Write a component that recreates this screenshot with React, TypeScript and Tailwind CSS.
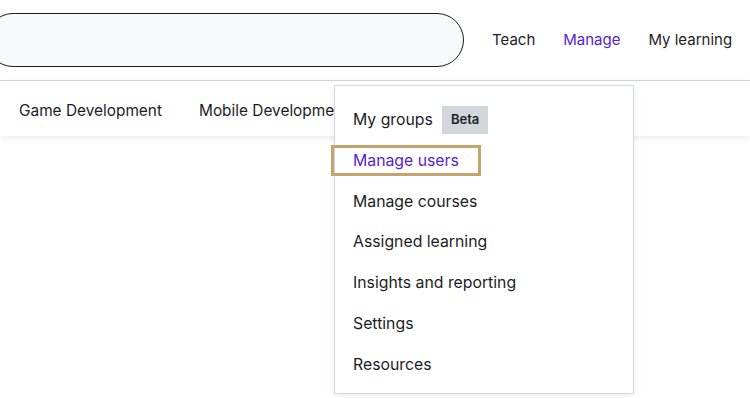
const menuItems = [
  'Manage users',
  'Manage courses',
  'Assigned learning',
  'Insights and reporting',
  'Settings',
  'Resources',
];

export default function App() {
  return (
    <div
      className="relative w-[750px] h-[398px] overflow-hidden bg-white text-[#1c1d1f]"
      style={{ fontFamily: 'Inter, "Liberation Sans", sans-serif' }}
    >
      <header className="flex h-[81px] items-center border-b border-[#d1d7dc]">
        <div className="ml-[-14px] h-[54px] w-[478px] rounded-full border border-[#1c1d1f] bg-[#f7f9fa]" />
        <nav className="ml-[28px] flex items-center gap-[28px] text-[15px]">
          <span>Teach</span>
          <span className="text-[#5624d0]">Manage</span>
          <span>My learning</span>
        </nav>
      </header>

      <div className="flex h-[55px] items-center gap-[37px] px-[19px] pt-[4px] text-[15.4px] shadow-[0_2px_6px_rgba(0,0,0,0.08)]">
        <span>Game Development</span>
        <span>Mobile Development</span>
      </div>

      <div className="absolute left-[334px] top-[85px] w-[300px] h-[309px] border border-[#d1d7dc] bg-white pt-[13.5px] shadow-[0_2px_8px_rgba(0,0,0,0.08)]">
        <div className="flex h-[40.8px] items-center gap-[9px] px-[18px] text-[15.8px]">
          <span>My groups</span>
          <span className="bg-[#d1d7dc] px-[9px] py-[4px] text-[13px] font-semibold">Beta</span>
        </div>
        {menuItems.map((item, i) => (
          <div
            key={item}
            className={`flex h-[40.8px] items-center px-[18px] text-[15.8px] ${i === 0 ? 'text-[#5624d0]' : ''}`}
          >
            {item}
          </div>
        ))}
      </div>

      <div className="absolute left-[331px] top-[145px] h-[31px] w-[150px] border-[3px] border-[#c4a46a]" />
    </div>
  );
}
